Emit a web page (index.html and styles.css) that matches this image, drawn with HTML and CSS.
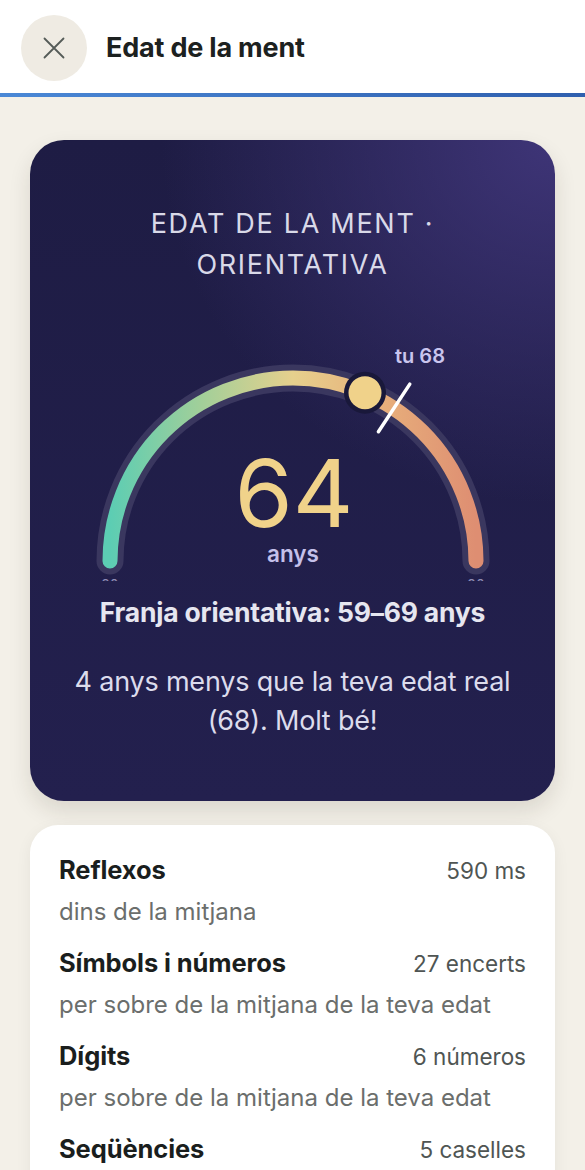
FILE: index.html
```html
<!DOCTYPE html>
<html lang="ca">
<head>
    <meta charset="UTF-8">
    <meta name="viewport" content="width=device-width, initial-scale=1.0">
    <title>Edat de la ment</title>
    <link rel="stylesheet" href="styles.css">
</head>
<body>

<header class="topbar">
    <button class="close-button" aria-label="Tancar">
        <svg width="24" height="24" viewBox="0 0 24 24">
            <path d="M2.5 2.5 L21.5 21.5 M21.5 2.5 L2.5 21.5" stroke="#555b58" stroke-width="1.8" stroke-linecap="round" fill="none"/>
        </svg>
    </button>
    <h1>Edat de la ment</h1>
</header>

<main class="content">
    <section class="age-card">
        <h2>Edat de la ment · orientativa</h2>

        <svg class="gauge" width="420" height="242" viewBox="0 0 420 242">
            <defs>
                <linearGradient id="arcGrad" x1="27" y1="0" x2="393" y2="0" gradientUnits="userSpaceOnUse">
                    <stop offset="0" stop-color="#5ccdb3"/>
                    <stop offset="0.25" stop-color="#a2cf99"/>
                    <stop offset="0.5" stop-color="#e6d08d"/>
                    <stop offset="0.72" stop-color="#e8b27c"/>
                    <stop offset="1" stop-color="#de8e72"/>
                </linearGradient>
            </defs>
            <path d="M27 222 A183 183 0 0 1 393 222" stroke="#3a375f" stroke-width="27" stroke-linecap="round" fill="none"/>
            <path d="M27 222 A183 183 0 0 1 393 222" stroke="url(#arcGrad)" stroke-width="15" stroke-linecap="round" fill="none"/>
            <line x1="295.4" y1="92.7" x2="326.8" y2="45.1" stroke="#ffffff" stroke-width="3.5" stroke-linecap="round"/>
            <circle cx="282" cy="53.7" r="21" fill="#19183a"/>
            <circle cx="282" cy="53.7" r="16.5" fill="#f0d28a"/>
            <text class="you-label" x="337" y="24" text-anchor="middle">tu 68</text>
            <text class="age-value" x="211" y="188" text-anchor="middle">64</text>
            <text class="age-unit" x="210" y="223" text-anchor="middle">anys</text>
            <text class="scale-label" x="27" y="251" text-anchor="middle">20</text>
            <text class="scale-label" x="393" y="251" text-anchor="middle">90</text>
        </svg>

        <p class="range">Franja orientativa: 59–69 anys</p>
        <p class="verdict">4 anys menys que la teva edat real (68). Molt bé!</p>
    </section>

    <section class="results">
        <div class="result-row">
            <div class="result-head">
                <span class="result-name">Reflexos</span>
                <span class="result-value">590 ms</span>
            </div>
            <div class="result-note">dins de la mitjana</div>
        </div>
        <div class="result-row">
            <div class="result-head">
                <span class="result-name">Símbols i números</span>
                <span class="result-value">27 encerts</span>
            </div>
            <div class="result-note">per sobre de la mitjana de la teva edat</div>
        </div>
        <div class="result-row">
            <div class="result-head">
                <span class="result-name">Dígits</span>
                <span class="result-value">6 números</span>
            </div>
            <div class="result-note">per sobre de la mitjana de la teva edat</div>
        </div>
        <div class="result-row">
            <div class="result-head">
                <span class="result-name">Seqüències</span>
                <span class="result-value">5 caselles</span>
            </div>
            <div class="result-note">per sobre de la mitjana de la teva edat</div>
        </div>
    </section>
</main>

</body>
</html>
```

FILE: styles.css
```css
body {
    margin: 0;
    font-family: Inter, "Noto Sans", sans-serif;
    background-color: #f3f0e8;
    color: #1a1e1d;
}
.topbar {
    box-sizing: border-box;
    height: 97px;
    display: flex;
    align-items: center;
    gap: 19px;
    padding: 2px 21px 0;
    background-color: #fff;
    border-bottom: 4px solid #3e74c4;
    border-image: linear-gradient(90deg, #4a88d6, #2f5fae) 1;
}
.close-button {
    width: 66px;
    height: 66px;
    border: none;
    border-radius: 50%;
    background-color: #efebe3;
    display: flex;
    align-items: center;
    justify-content: center;
    padding: 0;
    cursor: pointer;
}
.topbar h1 {
    margin: 0;
    font-size: 27px;
    font-weight: 700;
    color: #1c2120;
    letter-spacing: -0.2px;
}
.content {
    padding: 43px 30px 0;
}
.age-card {
    border-radius: 34px;
    padding: 63px 20px 61px;
    text-align: center;
    background:
        radial-gradient(ellipse 75% 55% at 100% 0%, rgba(64, 54, 122, 0.95), rgba(64, 54, 122, 0) 100%),
        linear-gradient(180deg, #1e1c44, #23204e);
    box-shadow: 0 10px 22px rgba(40, 30, 20, 0.12);
}
.age-card h2 {
    margin: 0;
    font-size: 27px;
    font-weight: 400;
    line-height: 41px;
    letter-spacing: 1.7px;
    text-transform: uppercase;
    color: #d9d9e8;
    padding: 0 90px;
}
.gauge {
    display: block;
    margin: 54px auto 0;
}
.you-label {
    font-size: 20px;
    font-weight: 600;
    fill: #c9c5ee;
}
.age-value {
    font-size: 94px;
    font-weight: 400;
    fill: #f0d28a;
}
.age-unit {
    font-size: 22.5px;
    font-weight: 600;
    fill: #c4c0ea;
}
.scale-label {
    font-size: 14px;
    fill: #8e8cb4;
}
.range {
    margin: 15px 0 0;
    font-size: 26.5px;
    font-weight: 700;
    line-height: 32px;
    color: #e6e6f0;
    letter-spacing: -0.2px;
}
.verdict {
    margin: 34px 0 0;
    font-size: 27px;
    line-height: 39px;
    color: #dcdcec;
    padding: 0 15px;
    letter-spacing: -0.2px;
}
.results {
    margin-top: 24px;
    background-color: #fff;
    border-radius: 28px;
    padding: 30px 29px 20px;
    display: flex;
    flex-direction: column;
    gap: 21px;
    box-shadow: 0 4px 16px rgba(40, 30, 20, 0.06);
}
.result-head {
    display: flex;
    justify-content: space-between;
    align-items: baseline;
    line-height: 30px;
}
.result-name {
    font-size: 25.5px;
    font-weight: 700;
    color: #1a1e1d;
    letter-spacing: -0.1px;
}
.result-value {
    font-size: 22.5px;
    color: #4f5553;
}
.result-note {
    margin-top: 11px;
    font-size: 24px;
    line-height: 30px;
    color: #6b6e6c;
}
```
